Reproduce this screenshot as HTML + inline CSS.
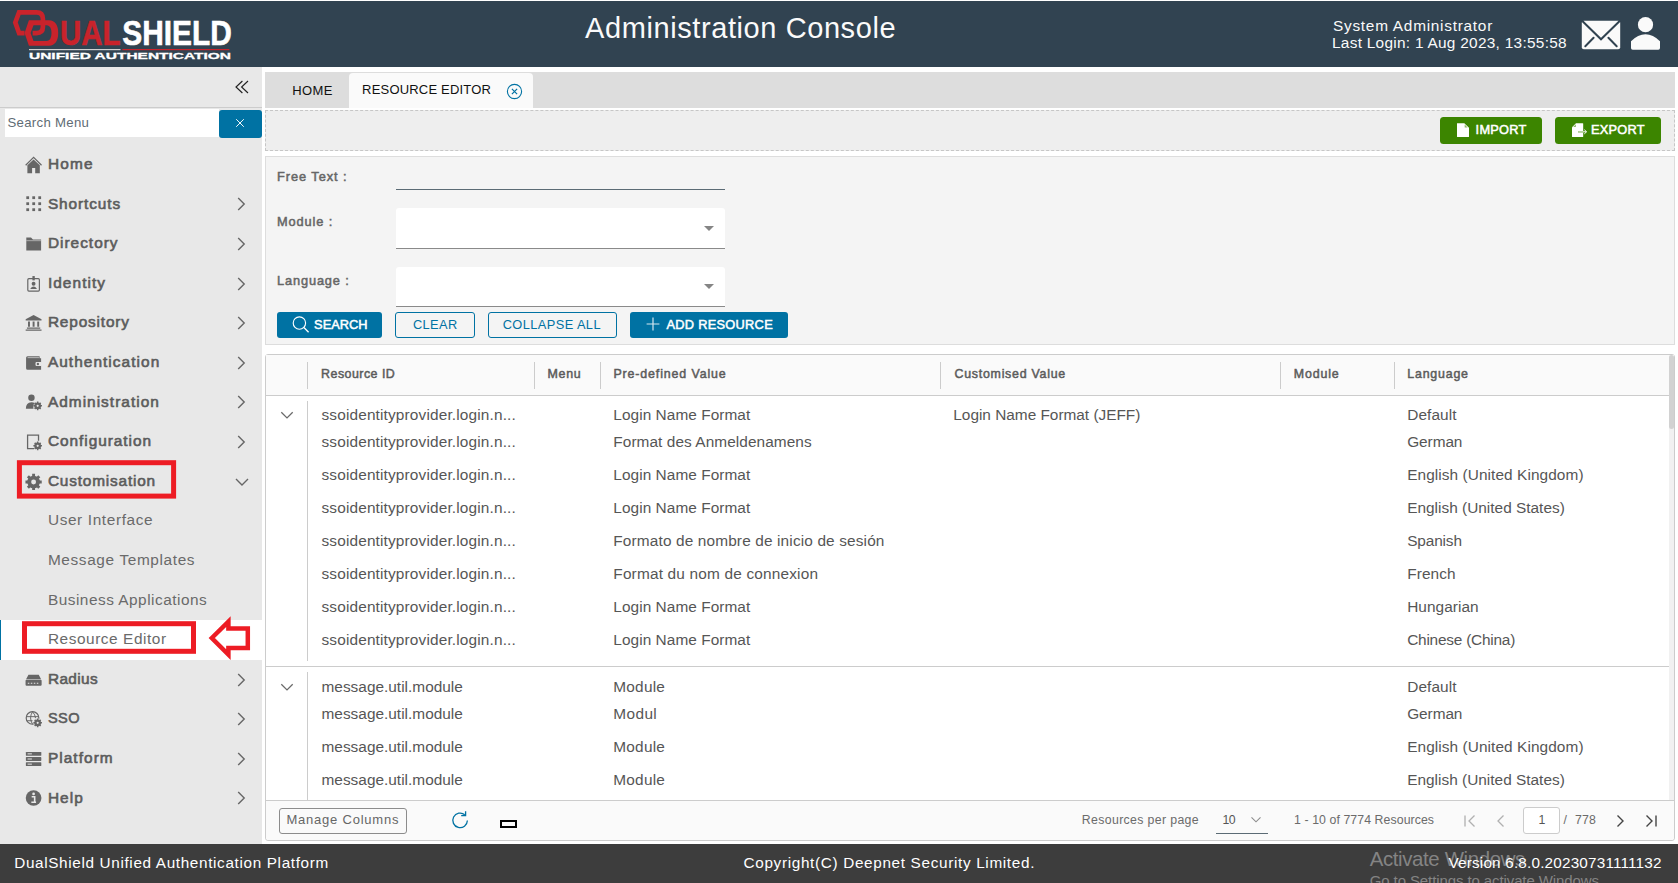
<!DOCTYPE html>
<html lang="en">
<head>
<meta charset="utf-8">
<title>Administration Console</title>
<style>
*{box-sizing:border-box;margin:0;padding:0}
html,body{width:1678px;height:883px;overflow:hidden;background:#fff;font-family:"Liberation Sans",sans-serif;color:#565656}
#p{position:relative;width:1678px;height:883px;overflow:hidden}
#p>div,#p>span,#p>svg{position:absolute}
#p>span{white-space:pre;color:#565656}
</style>
</head>
<body>
<div id="p">
<div style="left:0px;top:1px;width:1678px;height:66px;background:#314351;"></div>
<div style="left:0px;top:67px;width:262px;height:777px;background:#e8e8e8;"></div>
<div style="left:0px;top:844px;width:1678px;height:39px;background:#3d3d3d;"></div>
<svg style="left:0px;top:0px;" width="260" height="67" viewBox="0 0 260 67"><path d="M24.6 33.1 L19.1 33.1 L15.3 22.5 L19.1 12.3 L36.5 12.3 Q42.9 12.3 42.9 19 L42.9 26.8 Q42.9 33.1 36.5 33.1 L32.6 33.1" fill="none" stroke="#c9232b" stroke-width="4.7"/>
<path fill-rule="evenodd" fill="#c9232b" d="M28.9 20.3 L49 20.3 Q58.2 21 58.2 33 Q58.2 45 49 45.8 L28.9 45.8 L24.6 33.1 Z M33.5 25.2 L47 25.2 Q51.5 26 51.5 33 Q51.5 40.2 47 41 L33.5 41 L30.6 33 Z"/>
<text font-family="Liberation Sans, sans-serif" font-weight="700" font-size="35"><tspan x="53.2" y="35" font-size="5" fill="#c9232b">D</tspan><tspan x="60" y="45.4" fill="#c9232b" stroke="#c9232b" stroke-width="0.6" textLength="60.5" lengthAdjust="spacingAndGlyphs">UAL</tspan><tspan x="122.3" y="45.4" fill="#fff" stroke="#fff" stroke-width="0.6" textLength="109.5" lengthAdjust="spacingAndGlyphs">SHIELD</tspan></text>
<rect x="29" y="49" width="91.5" height="1.2" fill="#d0d0d0"/>
<rect x="122.4" y="49" width="107" height="1.2" fill="#c9232b"/>
<text x="29" y="59.3" font-family="Liberation Sans, sans-serif" font-weight="700" font-size="9.7" fill="#fff" stroke="#fff" stroke-width="0.3" textLength="202" lengthAdjust="spacingAndGlyphs">UNIFIED AUTHENTICATION</text></svg>
<span style="left:585.0px;top:12px;font-size:29px;line-height:32px;letter-spacing:0.59px;color:#fafafa;">Administration Console</span>
<span style="left:1333.0px;top:17px;font-size:15.4px;line-height:17px;letter-spacing:0.73px;color:#fafafa;">System Administrator</span>
<span style="left:1332.0px;top:34px;font-size:15.4px;line-height:17px;letter-spacing:0.28px;color:#fafafa;">Last Login: 1 Aug 2023, 13:55:58</span>
<svg style="left:1578px;top:15px;" width="90" height="40" viewBox="1578 15 90 40"><rect x="1581.8" y="20.8" width="38.4" height="28.5" rx="2" fill="#fafafa"/>
<path d="M1582.3 21 L1601 39.3 L1619.7 21" fill="none" stroke="#314351" stroke-width="2"/>
<path d="M1585.3 46.2 L1593.6 37.8 M1608.4 37.8 L1616.7 46.2" fill="none" stroke="#314351" stroke-width="2" stroke-linecap="round"/>
<circle cx="1645.5" cy="24.7" r="7.6" fill="#fafafa"/>
<path d="M1631 41.2 Q1638 34.2 1645.5 34.2 Q1653 34.2 1660 41.2 L1660 48 Q1660 49.7 1658.3 49.7 L1632.7 49.7 Q1631 49.7 1631 48 Z" fill="#fafafa"/></svg>
<svg style="left:235.3px;top:79.7px;" width="14" height="14" viewBox="0 0 14 14"><path d="M7.4 1 L1 7 L7.4 13 M13 1 L6.6 7 L13 13" fill="none" stroke="#222" stroke-width="1.15"/></svg>
<div style="left:0px;top:107px;width:262px;height:1px;background:#ccc;"></div>
<div style="left:5px;top:109px;width:214px;height:28px;background:#fff;"></div>
<span style="left:7.5px;top:115px;font-size:13.2px;line-height:15px;letter-spacing:0.29px;color:#5f6c75;">Search Menu</span>
<div style="left:219px;top:110px;width:43px;height:28px;background:#0072a3;border-radius:3px"></div>
<svg style="left:235.1px;top:118px;" width="10" height="10" viewBox="0 0 10 10"><path d="M1.2 1.2 L8.8 8.8 M8.8 1.2 L1.2 8.8" stroke="#fff" stroke-width="0.95"/></svg>
<svg style="left:24.7px;top:155.8px;" width="17.2" height="17.8" viewBox="0 0 16 16.6"><path d="M0.6 8.6 L8 1.2 L15.4 8.6" fill="none" stroke="#666" stroke-width="1.1"/><path d="M2.2 8.6 L8 3.2 L13.8 8.6 V16 H9.5 V11.2 H6.6 V16 H2.2 Z" fill="#666"/></svg>
<span style="left:47.9px;top:155px;font-size:15.4px;line-height:17px;letter-spacing:1.20px;color:#5c5c5c;-webkit-text-stroke:0.62px #5c5c5c;">Home</span>
<svg style="left:24.7px;top:195.4px;" width="17.2" height="17.8" viewBox="0 0 16 16.6"><rect x="1.2" y="1.2" width="2.6" height="2.6" fill="#666"/><rect x="1.2" y="6.8" width="2.6" height="2.6" fill="#666"/><rect x="1.2" y="12.4" width="2.6" height="2.6" fill="#666"/><rect x="6.8" y="1.2" width="2.6" height="2.6" fill="#666"/><rect x="6.8" y="6.8" width="2.6" height="2.6" fill="#666"/><rect x="6.8" y="12.4" width="2.6" height="2.6" fill="#666"/><rect x="12.4" y="1.2" width="2.6" height="2.6" fill="#666"/><rect x="12.4" y="6.8" width="2.6" height="2.6" fill="#666"/><rect x="12.4" y="12.4" width="2.6" height="2.6" fill="#666"/></svg>
<span style="left:47.9px;top:195px;font-size:15.4px;line-height:17px;letter-spacing:0.90px;color:#5c5c5c;-webkit-text-stroke:0.62px #5c5c5c;">Shortcuts</span>
<svg style="left:234px;top:197.3px;" width="14" height="14" viewBox="0 0 14 14"><path d="M4.2 1 L10.2 7 L4.2 13" fill="none" stroke="#666" stroke-width="1.4"/></svg>
<svg style="left:24.7px;top:235.0px;" width="17.2" height="17.8" viewBox="0 0 16 16.6"><path d="M1.2 2.4 H5.6 L7.4 4.2 H15 V14.4 H1.2 Z" fill="#666"/><path d="M1.2 5.3 H15" stroke="#e8e8e8" stroke-width="0.5"/></svg>
<span style="left:47.9px;top:234px;font-size:15.4px;line-height:17px;letter-spacing:1.01px;color:#5c5c5c;-webkit-text-stroke:0.62px #5c5c5c;">Directory</span>
<svg style="left:234px;top:236.9px;" width="14" height="14" viewBox="0 0 14 14"><path d="M4.2 1 L10.2 7 L4.2 13" fill="none" stroke="#666" stroke-width="1.4"/></svg>
<svg style="left:24.7px;top:274.6px;" width="17.2" height="17.8" viewBox="0 0 16 16.6"><rect x="2.6" y="3.4" width="10.8" height="11.6" rx="1" fill="none" stroke="#666" stroke-width="1.1"/><rect x="6.9" y="1" width="2.2" height="4" fill="#666"/><circle cx="8" cy="8.2" r="1.8" fill="#666"/><path d="M4.8 13 Q8 8.6 11.2 13 Z" fill="#666"/></svg>
<span style="left:47.9px;top:274px;font-size:15.4px;line-height:17px;letter-spacing:1.07px;color:#5c5c5c;-webkit-text-stroke:0.62px #5c5c5c;">Identity</span>
<svg style="left:234px;top:276.5px;" width="14" height="14" viewBox="0 0 14 14"><path d="M4.2 1 L10.2 7 L4.2 13" fill="none" stroke="#666" stroke-width="1.4"/></svg>
<svg style="left:24.7px;top:314.2px;" width="17.2" height="17.8" viewBox="0 0 16 16.6"><path d="M8 1 L15.4 4.8 V6 H0.6 V4.8 Z M2.8 7 H4.6 V11.8 H2.8 Z M7.1 7 H8.9 V11.8 H7.1 Z M11.4 7 H13.2 V11.8 H11.4 Z M1.8 12.6 H14.2 V13.7 H1.8 Z M0.6 14.4 H15.4 V15.6 H0.6 Z" fill="#666"/></svg>
<span style="left:47.9px;top:313px;font-size:15.4px;line-height:17px;letter-spacing:0.84px;color:#5c5c5c;-webkit-text-stroke:0.62px #5c5c5c;">Repository</span>
<svg style="left:234px;top:316.1px;" width="14" height="14" viewBox="0 0 14 14"><path d="M4.2 1 L10.2 7 L4.2 13" fill="none" stroke="#666" stroke-width="1.4"/></svg>
<svg style="left:24.7px;top:353.8px;" width="17.2" height="17.8" viewBox="0 0 16 16.6"><path d="M1 3.4 Q1 2 2.4 2 H13.6 V4 H15 V14.6 H2.4 Q1 14.6 1 13.2 Z" fill="#666"/><path d="M2.4 3.4 H13" stroke="#e8e8e8" stroke-width="0.6"/><rect x="9.8" y="7.4" width="6" height="3.8" rx="1" fill="#e8e8e8"/><circle cx="12" cy="9.3" r="1.1" fill="#666"/></svg>
<span style="left:47.9px;top:353px;font-size:15.4px;line-height:17px;letter-spacing:1.06px;color:#5c5c5c;-webkit-text-stroke:0.62px #5c5c5c;">Authentication</span>
<svg style="left:234px;top:355.7px;" width="14" height="14" viewBox="0 0 14 14"><path d="M4.2 1 L10.2 7 L4.2 13" fill="none" stroke="#666" stroke-width="1.4"/></svg>
<svg style="left:24.7px;top:393.4px;" width="17.2" height="17.8" viewBox="0 0 16 16.6"><circle cx="6" cy="4.4" r="3" fill="#666"/><path d="M0.8 14.8 Q0.8 8.6 6 8.6 Q8 8.6 9 9.4 Q7 11.4 8 14.8 Z" fill="#666"/><circle cx="11.8" cy="12" r="2.3" fill="none" stroke="#666" stroke-width="1.7"/><path d="M11.8 8 V16 M7.800000000000001 12 H15.8 M9.0 9.2 L14.600000000000001 14.8 M14.600000000000001 9.2 L9.0 14.8" stroke="#666" stroke-width="1.4"/><circle cx="11.8" cy="12" r="1" fill="#e8e8e8"/></svg>
<span style="left:47.9px;top:393px;font-size:15.4px;line-height:17px;letter-spacing:1.03px;color:#5c5c5c;-webkit-text-stroke:0.62px #5c5c5c;">Administration</span>
<svg style="left:234px;top:395.3px;" width="14" height="14" viewBox="0 0 14 14"><path d="M4.2 1 L10.2 7 L4.2 13" fill="none" stroke="#666" stroke-width="1.4"/></svg>
<svg style="left:24.7px;top:433.0px;" width="17.2" height="17.8" viewBox="0 0 16 16.6"><path d="M8.4 14.6 H2.4 V2 H12.6 V7.2" fill="none" stroke="#666" stroke-width="1.2"/><circle cx="11.8" cy="12" r="2.3" fill="none" stroke="#666" stroke-width="1.7"/><path d="M11.8 8 V16 M7.800000000000001 12 H15.8 M9.0 9.2 L14.600000000000001 14.8 M14.600000000000001 9.2 L9.0 14.8" stroke="#666" stroke-width="1.4"/><circle cx="11.8" cy="12" r="1" fill="#e8e8e8"/></svg>
<span style="left:47.9px;top:432px;font-size:15.4px;line-height:17px;letter-spacing:0.97px;color:#5c5c5c;-webkit-text-stroke:0.62px #5c5c5c;">Configuration</span>
<svg style="left:234px;top:434.9px;" width="14" height="14" viewBox="0 0 14 14"><path d="M4.2 1 L10.2 7 L4.2 13" fill="none" stroke="#666" stroke-width="1.4"/></svg>
<svg style="left:24.7px;top:472.6px;" width="17.2" height="17.8" viewBox="0 0 16 16.6"><circle cx="8" cy="8.4" r="4.3" fill="none" stroke="#666" stroke-width="3.2"/><path d="M8 0.8 V16 M0.4 8.4 H15.6 M2.7 3.1 L13.3 13.7 M13.3 3.1 L2.7 13.7" stroke="#666" stroke-width="2.7"/><circle cx="8" cy="8.4" r="2.3" fill="#e8e8e8"/></svg>
<span style="left:47.9px;top:472px;font-size:15.4px;line-height:17px;letter-spacing:0.81px;color:#5c5c5c;-webkit-text-stroke:0.62px #5c5c5c;">Customisation</span>
<svg style="left:234.8px;top:474.5px;" width="14" height="14" viewBox="0 0 14 14"><path d="M1 4 L7 10 L13 4" fill="none" stroke="#666" stroke-width="1.4"/></svg>
<span style="left:47.9px;top:511px;font-size:15.4px;line-height:17px;letter-spacing:0.62px;color:#6a6a6a;">User Interface</span>
<span style="left:47.9px;top:551px;font-size:15.4px;line-height:17px;letter-spacing:0.63px;color:#6a6a6a;">Message Templates</span>
<span style="left:47.9px;top:591px;font-size:15.4px;line-height:17px;letter-spacing:0.50px;color:#6a6a6a;">Business Applications</span>
<div style="left:0px;top:620px;width:262px;height:40px;background:#fff;"></div>
<div style="left:0px;top:620px;width:1px;height:40px;background:#0072a3;"></div>
<span style="left:47.9px;top:630px;font-size:15.4px;line-height:17px;letter-spacing:0.56px;color:#6a6a6a;">Resource Editor</span>
<svg style="left:24.7px;top:670.6px;" width="17.2" height="17.8" viewBox="0 0 16 16.6"><path d="M3.2 3.4 H12.8 L15 7.6 H1 Z" fill="#666"/><rect x="0.5" y="8.2" width="15" height="5.6" rx="0.9" fill="#666"/><path d="M2.6 11.4 H4 M5.4 11.4 H6.8 M8.2 11.4 H9.6 M11 11.4 H12.4" stroke="#e8e8e8" stroke-width="1"/></svg>
<span style="left:47.9px;top:670px;font-size:15.4px;line-height:17px;letter-spacing:0.38px;color:#5c5c5c;-webkit-text-stroke:0.62px #5c5c5c;">Radius</span>
<svg style="left:234px;top:672.5px;" width="14" height="14" viewBox="0 0 14 14"><path d="M4.2 1 L10.2 7 L4.2 13" fill="none" stroke="#666" stroke-width="1.4"/></svg>
<svg style="left:24.7px;top:710.2px;" width="17.2" height="17.8" viewBox="0 0 16 16.6"><circle cx="7" cy="7.4" r="5.9" fill="none" stroke="#666" stroke-width="1.1"/><path d="M1.4 6.2 H12.4 M7 1.6 Q3.4 7.4 7 13.2 M7 1.6 Q9.6 4.4 9.8 7.6 M2 10 H7" fill="none" stroke="#666" stroke-width="0.9"/><circle cx="11.8" cy="12" r="4" fill="#e8e8e8"/><circle cx="11.8" cy="12" r="2.3" fill="none" stroke="#666" stroke-width="1.7"/><path d="M11.8 8 V16 M7.800000000000001 12 H15.8 M9.0 9.2 L14.600000000000001 14.8 M14.600000000000001 9.2 L9.0 14.8" stroke="#666" stroke-width="1.4"/><circle cx="11.8" cy="12" r="1" fill="#e8e8e8"/></svg>
<span style="left:47.9px;top:710px;font-size:14.6px;line-height:16px;letter-spacing:0.47px;color:#5c5c5c;-webkit-text-stroke:0.58px #5c5c5c;">SSO</span>
<svg style="left:234px;top:712.1px;" width="14" height="14" viewBox="0 0 14 14"><path d="M4.2 1 L10.2 7 L4.2 13" fill="none" stroke="#666" stroke-width="1.4"/></svg>
<svg style="left:24.7px;top:749.8px;" width="17.2" height="17.8" viewBox="0 0 16 16.6"><rect x="0.8" y="1.8" width="14.4" height="3.6" rx="0.6" fill="#666"/><rect x="0.8" y="6.6" width="14.4" height="3.6" rx="0.6" fill="#666"/><rect x="0.8" y="11.4" width="14.4" height="3.6" rx="0.6" fill="#666"/><path d="M2.4 3.6 H6.4 M2.4 8.4 H6.4 M2.4 13.2 H6.4" stroke="#e8e8e8" stroke-width="0.9"/></svg>
<span style="left:47.9px;top:749px;font-size:15.4px;line-height:17px;letter-spacing:1.07px;color:#5c5c5c;-webkit-text-stroke:0.62px #5c5c5c;">Platform</span>
<svg style="left:234px;top:751.7px;" width="14" height="14" viewBox="0 0 14 14"><path d="M4.2 1 L10.2 7 L4.2 13" fill="none" stroke="#666" stroke-width="1.4"/></svg>
<svg style="left:24.7px;top:789.4px;" width="17.2" height="17.8" viewBox="0 0 16 16.6"><circle cx="8" cy="8.4" r="7.3" fill="#666"/><path d="M6.2 7.2 H9 V12 M5.9 12.4 H10.3" fill="none" stroke="#e8e8e8" stroke-width="1.5"/><circle cx="8" cy="4.6" r="1.25" fill="#e8e8e8"/></svg>
<span style="left:47.9px;top:789px;font-size:15.4px;line-height:17px;letter-spacing:1.07px;color:#5c5c5c;-webkit-text-stroke:0.62px #5c5c5c;">Help</span>
<svg style="left:234px;top:791.3px;" width="14" height="14" viewBox="0 0 14 14"><path d="M4.2 1 L10.2 7 L4.2 13" fill="none" stroke="#666" stroke-width="1.4"/></svg>
<svg style="left:0px;top:440px;" width="262" height="240" viewBox="0 440 262 240"><rect x="19.4" y="462.7" width="154.2" height="33.4" fill="none" stroke="#ed1c24" stroke-width="5"/>
<rect x="24.5" y="623.7" width="169" height="27.6" fill="none" stroke="#ed1c24" stroke-width="5"/>
<path d="M211.8 638 L228.4 621.6 L228.4 628.6 L247.8 628.6 L247.8 648.1 L228.4 648.1 L228.4 654.6 Z" fill="none" stroke="#ed1c24" stroke-width="4.5"/></svg>
<div style="left:265px;top:72px;width:1410px;height:36px;background:#ddd;"></div>
<div style="left:349px;top:73px;width:184px;height:35px;background:#fafafa;border-radius:4px 4px 0 0"></div>
<span style="left:292.3px;top:83px;font-size:13px;line-height:15px;letter-spacing:0.36px;color:#111;">HOME</span>
<span style="left:362.1px;top:82px;font-size:13px;line-height:15px;letter-spacing:0.19px;color:#111;">RESOURCE EDITOR</span>
<svg style="left:506px;top:82.5px;" width="17" height="17" viewBox="0 0 17 17"><circle cx="8.5" cy="8.5" r="7.1" fill="none" stroke="#0072a3" stroke-width="1.1"/><path d="M5.9 5.9 L11.1 11.1 M11.1 5.9 L5.9 11.1" stroke="#0072a3" stroke-width="1.2"/></svg>
<div style="left:265px;top:110px;width:1410px;height:41px;background:#eee;border:1px dashed #c6c6c6"></div>
<div style="left:1440px;top:117px;width:102px;height:26.8px;background:#3c8500;border-radius:3.5px"></div>
<div style="left:1555px;top:117px;width:106px;height:26.8px;background:#3c8500;border-radius:3.5px"></div>
<svg style="left:1457px;top:123px;" width="12" height="14" viewBox="0 0 12 14"><path d="M0 0.3 H7.3 L12 4.8 V13.4 Q12 13.9 11.5 13.9 H0.5 Q0 13.9 0 13.4 Z" fill="#fff"/><path d="M7.7 1.6 V4.4 H10.6 Z" fill="#8fba68"/></svg>
<span style="left:1475.6px;top:122px;font-size:12.8px;line-height:15px;letter-spacing:0.26px;color:#fff;-webkit-text-stroke:0.51px #fff;">IMPORT</span>
<svg style="left:1572px;top:123px;" width="16" height="14" viewBox="0 0 16 14"><path d="M4 0.3 H10.7 Q11.2 0.3 11.2 0.8 V13.4 Q11.2 13.9 10.7 13.9 H0.5 Q0 13.9 0 13.4 V4.3 Z" fill="#fff"/><path d="M1.2 3.9 H3.9 V1.2 Z" fill="#8fba68"/><path d="M6 8.8 H11.2" stroke="#7fae55" stroke-width="1.6"/><path d="M6.4 8.8 H14.3 M12.3 6.7 L14.6 8.8 L12.3 10.9" fill="none" stroke="#fff" stroke-width="1"/><path d="M6.4 8.8 H11.2" stroke="#a9cc8a" stroke-width="1"/></svg>
<span style="left:1591.1px;top:122px;font-size:12.8px;line-height:15px;letter-spacing:0.22px;color:#fff;-webkit-text-stroke:0.51px #fff;">EXPORT</span>
<div style="left:265px;top:156px;width:1410px;height:189px;background:#f4f4f4;border:1px solid #ddd"></div>
<span style="left:277.0px;top:169px;font-size:12.8px;line-height:15px;letter-spacing:0.94px;color:#666;-webkit-text-stroke:0.51px #666;">Free Text :</span>
<span style="left:277.0px;top:214px;font-size:12.8px;line-height:15px;letter-spacing:0.89px;color:#666;-webkit-text-stroke:0.51px #666;">Module :</span>
<span style="left:277.0px;top:273px;font-size:12.8px;line-height:15px;letter-spacing:0.86px;color:#666;-webkit-text-stroke:0.51px #666;">Language :</span>
<div style="left:396px;top:188.5px;width:329px;height:1px;background:#5b6b75;"></div>
<div style="left:396px;top:208px;width:329px;height:41px;background:#fff;border-bottom:1px solid #8a8a8a;border-radius:3px 3px 0 0"></div>
<div style="left:396px;top:267px;width:329px;height:40px;background:#fff;border-bottom:1px solid #8a8a8a;border-radius:3px 3px 0 0"></div>
<div style="left:704px;top:226px;border:5px solid transparent;border-top-color:#858585;border-bottom:0"></div>
<div style="left:704px;top:284px;border:5px solid transparent;border-top-color:#858585;border-bottom:0"></div>
<div style="left:277px;top:312px;width:105px;height:26px;background:#0072a3;border-radius:3px"></div>
<svg style="left:292px;top:316px;" width="18" height="18" viewBox="0 0 18 18"><circle cx="7.4" cy="7" r="6.2" fill="none" stroke="#fff" stroke-width="1.15"/><path d="M11.9 11.5 L16.6 16.2" stroke="#fff" stroke-width="1.3"/></svg>
<span style="left:314.1px;top:317px;font-size:12.8px;line-height:15px;color:#fff;-webkit-text-stroke:0.51px #fff;">SEARCH</span>
<div style="left:395px;top:312px;width:80px;height:26px;border:1px solid #0072a3;border-radius:3px"></div>
<span style="left:412.9px;top:317px;font-size:12.8px;line-height:15px;letter-spacing:0.39px;color:#0072a3;">CLEAR</span>
<div style="left:488px;top:312px;width:129px;height:26px;border:1px solid #0072a3;border-radius:3px"></div>
<span style="left:502.7px;top:317px;font-size:12.8px;line-height:15px;letter-spacing:0.42px;color:#0072a3;">COLLAPSE ALL</span>
<div style="left:630px;top:312px;width:158px;height:26px;background:#0072a3;border-radius:3px"></div>
<svg style="left:645.9px;top:317.1px;" width="14" height="14" viewBox="0 0 14 14"><path d="M7 0.6 V13.4 M0.6 7 H13.4" stroke="#d4e7f0" stroke-width="1.2"/></svg>
<span style="left:666.5px;top:317px;font-size:12.8px;line-height:15px;letter-spacing:0.28px;color:#fff;-webkit-text-stroke:0.51px #fff;">ADD RESOURCE</span>
<div style="left:265px;top:354px;width:1410px;height:487px;background:#fff;border:1px solid #ccc;border-radius:3px"></div>
<div style="left:266px;top:355px;width:1408px;height:41px;background:#fafafa;border-bottom:1px solid #ccc"></div>
<div style="left:307px;top:362px;width:1px;height:27px;background:#ccc;"></div>
<div style="left:534px;top:362px;width:1px;height:27px;background:#ccc;"></div>
<div style="left:600px;top:362px;width:1px;height:27px;background:#ccc;"></div>
<div style="left:940px;top:362px;width:1px;height:27px;background:#ccc;"></div>
<div style="left:1280px;top:362px;width:1px;height:27px;background:#ccc;"></div>
<div style="left:1394px;top:362px;width:1px;height:27px;background:#ccc;"></div>
<span style="left:321.1px;top:367px;font-size:12.4px;line-height:14px;letter-spacing:0.48px;color:#5c5c5c;-webkit-text-stroke:0.5px #5c5c5c;">Resource ID</span>
<span style="left:547.6px;top:367px;font-size:12.4px;line-height:14px;letter-spacing:0.70px;color:#5c5c5c;-webkit-text-stroke:0.5px #5c5c5c;">Menu</span>
<span style="left:613.4px;top:367px;font-size:12.4px;line-height:14px;letter-spacing:0.88px;color:#5c5c5c;-webkit-text-stroke:0.5px #5c5c5c;">Pre-defined Value</span>
<span style="left:954.5px;top:367px;font-size:12.4px;line-height:14px;letter-spacing:0.74px;color:#5c5c5c;-webkit-text-stroke:0.5px #5c5c5c;">Customised Value</span>
<span style="left:1293.8px;top:367px;font-size:12.4px;line-height:14px;letter-spacing:0.85px;color:#5c5c5c;-webkit-text-stroke:0.5px #5c5c5c;">Module</span>
<span style="left:1407.3px;top:367px;font-size:12.4px;line-height:14px;letter-spacing:0.79px;color:#5c5c5c;-webkit-text-stroke:0.5px #5c5c5c;">Language</span>
<div style="left:307px;top:401px;width:1px;height:260px;background:#ccc;"></div>
<div style="left:307px;top:672px;width:1px;height:128px;background:#ccc;"></div>
<div style="left:266px;top:666px;width:1403px;height:1px;background:#ccc;"></div>
<svg style="left:279px;top:408.5px;" width="16" height="12" viewBox="0 0 16 12"><path d="M2.3 3.2 L8 8.9 L13.7 3.2" fill="none" stroke="#6a6a6a" stroke-width="1.3"/></svg>
<svg style="left:279px;top:680.5px;" width="16" height="12" viewBox="0 0 16 12"><path d="M2.3 3.2 L8 8.9 L13.7 3.2" fill="none" stroke="#6a6a6a" stroke-width="1.3"/></svg>
<span style="left:321.5px;top:406px;font-size:15.4px;line-height:17px;letter-spacing:0.15px;">ssoidentityprovider.login.n...</span>
<span style="left:613.3px;top:406px;font-size:15.4px;line-height:17px;letter-spacing:0.06px;">Login Name Format</span>
<span style="left:953.3px;top:406px;font-size:15.4px;line-height:17px;letter-spacing:-0.01px;">Login Name Format (JEFF)</span>
<span style="left:1407.2px;top:406px;font-size:15.4px;line-height:17px;letter-spacing:0.10px;">Default</span>
<span style="left:321.5px;top:433px;font-size:15.4px;line-height:17px;letter-spacing:0.15px;">ssoidentityprovider.login.n...</span>
<span style="left:613.3px;top:433px;font-size:15.4px;line-height:17px;letter-spacing:0.07px;">Format des Anmeldenamens</span>
<span style="left:1407.2px;top:433px;font-size:15.4px;line-height:17px;letter-spacing:-0.07px;">German</span>
<span style="left:321.5px;top:466px;font-size:15.4px;line-height:17px;letter-spacing:0.15px;">ssoidentityprovider.login.n...</span>
<span style="left:613.3px;top:466px;font-size:15.4px;line-height:17px;letter-spacing:0.06px;">Login Name Format</span>
<span style="left:1407.2px;top:466px;font-size:15.4px;line-height:17px;letter-spacing:0.08px;">English (United Kingdom)</span>
<span style="left:321.5px;top:499px;font-size:15.4px;line-height:17px;letter-spacing:0.15px;">ssoidentityprovider.login.n...</span>
<span style="left:613.3px;top:499px;font-size:15.4px;line-height:17px;letter-spacing:0.06px;">Login Name Format</span>
<span style="left:1407.2px;top:499px;font-size:15.4px;line-height:17px;letter-spacing:0.01px;">English (United States)</span>
<span style="left:321.5px;top:532px;font-size:15.4px;line-height:17px;letter-spacing:0.15px;">ssoidentityprovider.login.n...</span>
<span style="left:613.3px;top:532px;font-size:15.4px;line-height:17px;letter-spacing:0.14px;">Formato de nombre de inicio de sesión</span>
<span style="left:1407.2px;top:532px;font-size:15.4px;line-height:17px;letter-spacing:-0.14px;">Spanish</span>
<span style="left:321.5px;top:565px;font-size:15.4px;line-height:17px;letter-spacing:0.15px;">ssoidentityprovider.login.n...</span>
<span style="left:613.3px;top:565px;font-size:15.4px;line-height:17px;letter-spacing:0.18px;">Format du nom de connexion</span>
<span style="left:1407.2px;top:565px;font-size:15.4px;line-height:17px;letter-spacing:0.09px;">French</span>
<span style="left:321.5px;top:598px;font-size:15.4px;line-height:17px;letter-spacing:0.15px;">ssoidentityprovider.login.n...</span>
<span style="left:613.3px;top:598px;font-size:15.4px;line-height:17px;letter-spacing:0.06px;">Login Name Format</span>
<span style="left:1407.2px;top:598px;font-size:15.4px;line-height:17px;letter-spacing:0.06px;">Hungarian</span>
<span style="left:321.5px;top:631px;font-size:15.4px;line-height:17px;letter-spacing:0.15px;">ssoidentityprovider.login.n...</span>
<span style="left:613.3px;top:631px;font-size:15.4px;line-height:17px;letter-spacing:0.06px;">Login Name Format</span>
<span style="left:1407.2px;top:631px;font-size:15.4px;line-height:17px;letter-spacing:-0.22px;">Chinese (China)</span>
<span style="left:321.5px;top:678px;font-size:15.4px;line-height:17px;letter-spacing:0.01px;">message.util.module</span>
<span style="left:613.3px;top:678px;font-size:15.4px;line-height:17px;letter-spacing:0.22px;">Module</span>
<span style="left:1407.2px;top:678px;font-size:15.4px;line-height:17px;letter-spacing:0.10px;">Default</span>
<span style="left:321.5px;top:705px;font-size:15.4px;line-height:17px;letter-spacing:0.01px;">message.util.module</span>
<span style="left:613.3px;top:705px;font-size:15.4px;line-height:17px;letter-spacing:0.38px;">Modul</span>
<span style="left:1407.2px;top:705px;font-size:15.4px;line-height:17px;letter-spacing:-0.07px;">German</span>
<span style="left:321.5px;top:738px;font-size:15.4px;line-height:17px;letter-spacing:0.01px;">message.util.module</span>
<span style="left:613.3px;top:738px;font-size:15.4px;line-height:17px;letter-spacing:0.22px;">Module</span>
<span style="left:1407.2px;top:738px;font-size:15.4px;line-height:17px;letter-spacing:0.08px;">English (United Kingdom)</span>
<span style="left:321.5px;top:771px;font-size:15.4px;line-height:17px;letter-spacing:0.01px;">message.util.module</span>
<span style="left:613.3px;top:771px;font-size:15.4px;line-height:17px;letter-spacing:0.22px;">Module</span>
<span style="left:1407.2px;top:771px;font-size:15.4px;line-height:17px;letter-spacing:0.01px;">English (United States)</span>
<div style="left:1669px;top:355px;width:5px;height:445px;background:#f1f1f1;"></div>
<div style="left:1669px;top:355px;width:5px;height:74px;background:#d2d2d2;border-radius:3px"></div>
<div style="left:266px;top:800px;width:1408px;height:40px;background:#fafafa;border-top:1px solid #ccc;border-radius:0 0 3px 3px"></div>
<div style="left:279px;top:807.5px;width:128px;height:26px;border:1px solid #8c8c8c;border-radius:3px"></div>
<span style="left:286.5px;top:812px;font-size:13px;line-height:15px;letter-spacing:0.77px;color:#666;">Manage Columns</span>
<svg style="left:450px;top:810px;" width="20" height="20" viewBox="0 0 20 20"><path d="M17.4 10.6 A7.3 7.3 0 1 1 14.8 4.8" fill="none" stroke="#0072a3" stroke-width="1.3"/><path d="M15.6 1.2 V5.6 H11.2" fill="none" stroke="#0072a3" stroke-width="1.3"/></svg>
<div style="left:500px;top:819.5px;width:17px;height:8px;border:2px solid #000"></div>
<span style="left:1081.8px;top:813px;font-size:12.3px;line-height:14px;letter-spacing:0.36px;color:#6b6b6b;">Resources per page</span>
<span style="left:1222.4px;top:813px;font-size:12.3px;line-height:14px;color:#555;letter-spacing:-0.6px">10</span>
<svg style="left:1250px;top:815px;" width="12" height="10" viewBox="0 0 12 10"><path d="M1.5 2.3 L6 6.8 L10.5 2.3" fill="none" stroke="#8c8c8c" stroke-width="1.1"/></svg>
<div style="left:1216px;top:833px;width:52px;height:1px;background:#5b6b75;"></div>
<span style="left:1294.1px;top:813px;font-size:12.3px;line-height:14px;letter-spacing:0.08px;color:#6b6b6b;">1 - 10 of 7774 Resources</span>
<svg style="left:1461.6px;top:812.7px;" width="16" height="16" viewBox="0 0 16 16"><path d="M3 2.5 V13.5 M12.5 2.5 L7 8 L12.5 13.5" fill="none" stroke="#b0b0b0" stroke-width="1.3"/></svg>
<svg style="left:1493.4px;top:812.7px;" width="16" height="16" viewBox="0 0 16 16"><path d="M10.5 2.5 L5 8 L10.5 13.5" fill="none" stroke="#b0b0b0" stroke-width="1.3"/></svg>
<div style="left:1523px;top:806.5px;width:37px;height:27px;background:#fff;border:1px solid #ccc;border-radius:3px"></div>
<span style="left:1538.5px;top:813px;font-size:12.3px;line-height:14px;color:#555;">1</span>
<span style="left:1563.4px;top:813px;font-size:12.3px;line-height:14px;color:#6b6b6b;">/</span>
<span style="left:1575.0px;top:813px;font-size:12.3px;line-height:14px;letter-spacing:0.16px;color:#6b6b6b;">778</span>
<svg style="left:1612.3px;top:812.7px;" width="16" height="16" viewBox="0 0 16 16"><path d="M5.5 2.5 L11 8 L5.5 13.5" fill="none" stroke="#444" stroke-width="1.4"/></svg>
<svg style="left:1643.2px;top:812.7px;" width="16" height="16" viewBox="0 0 16 16"><path d="M13 2.5 V13.5 M3.5 2.5 L9 8 L3.5 13.5" fill="none" stroke="#444" stroke-width="1.4"/></svg>
<span style="left:1369.7px;top:848px;font-size:20.4px;line-height:22px;letter-spacing:-0.36px;color:#848484;">Activate Windows</span>
<span style="left:1369.7px;top:872px;font-size:15px;line-height:17px;letter-spacing:-0.10px;color:#848484;">Go to Settings to activate Windows.</span>
<span style="left:14.2px;top:854px;font-size:15.3px;line-height:17px;letter-spacing:0.65px;color:#fff;">DualShield Unified Authentication Platform</span>
<span style="left:743.5px;top:854px;font-size:15.3px;line-height:17px;letter-spacing:0.67px;color:#fff;">Copyright(C) Deepnet Security Limited.</span>
<span style="left:1448.5px;top:854px;font-size:15.3px;line-height:17px;letter-spacing:0.18px;color:#fff;">Version 6.8.0.20230731111132</span>
</div>
</body>
</html>
